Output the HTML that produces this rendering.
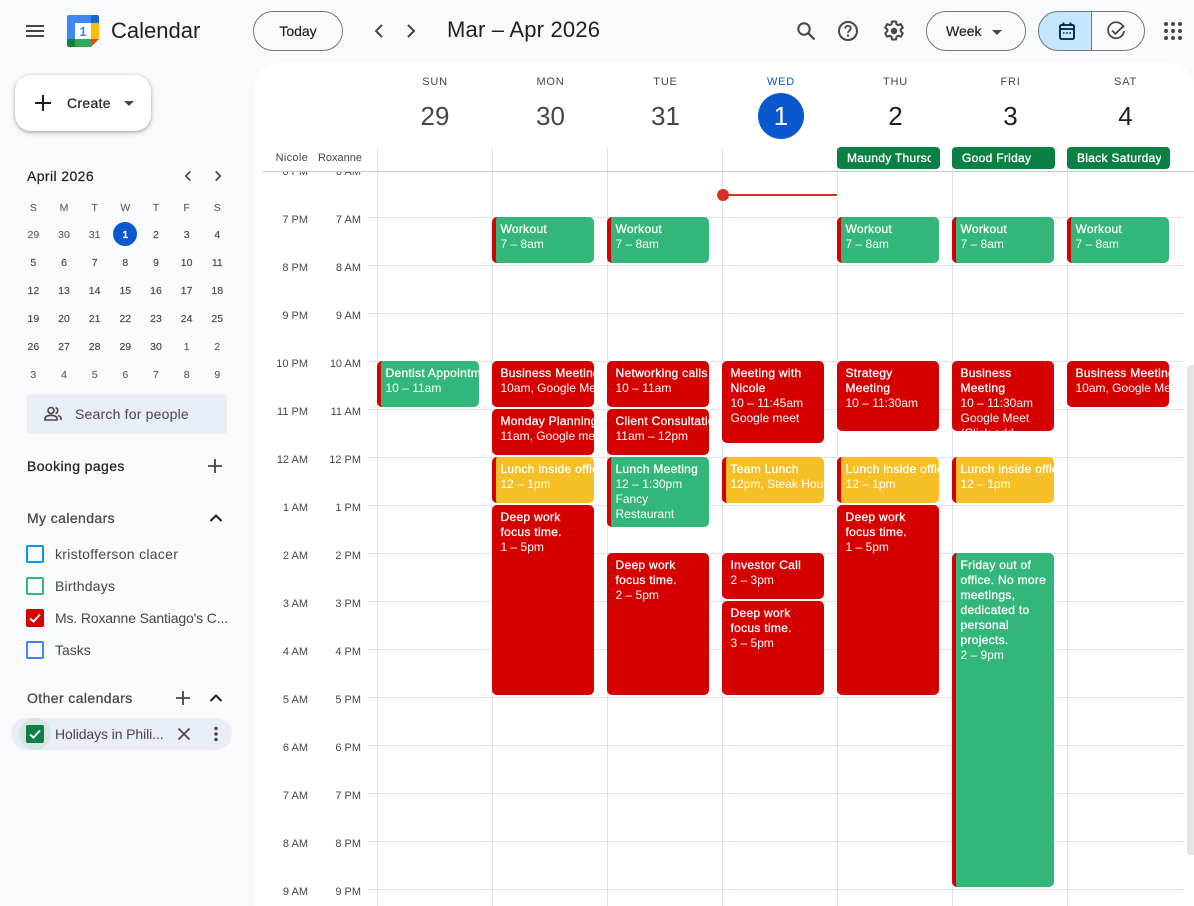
<!DOCTYPE html>
<html><head><meta charset="utf-8"><title>Calendar</title>
<style>
*{box-sizing:border-box}
html,body{margin:0;padding:0}
body{width:1194px;height:906px;overflow:hidden;background:#f8fafd;position:relative;font-family:"Liberation Sans",sans-serif;color:#1f1f1f}
.a{position:absolute;white-space:nowrap}
svg{position:absolute;display:block}
.btn{position:absolute;border:1px solid #747775;border-radius:20px;height:40px;top:11px;font-size:14px;line-height:38px;text-align:center;-webkit-text-stroke:.2px}
.mini{position:absolute;left:18px;top:194px;display:grid;grid-template-columns:repeat(7,30.67px);grid-auto-rows:28px;font-size:10.5px;text-align:center;line-height:28px;-webkit-text-stroke:.15px}
.mini i{font-style:normal;color:#444746}
.mini b{font-weight:normal;color:#fff}
.mini .g{color:#5f6368}
.h{font-size:14px;left:27px;-webkit-text-stroke:.25px;line-height:16px;letter-spacing:.4px}
.it{font-size:14px;left:55px;color:#444746;line-height:16px}
.cb{position:absolute;left:26px;width:18px;height:18px;border-radius:2px;border:2px solid}
.dn{position:absolute;top:75px;width:100px;text-align:center;font-size:11px;letter-spacing:.8px;color:#444746;line-height:13px;margin-top:1px}
.dd{position:absolute;top:100px;width:100px;text-align:center;font-size:26px;color:#444746;line-height:32px}
.vl{position:absolute;top:148px;bottom:0;width:1px;background:#dde3ea}
.hl{position:absolute;left:369px;width:814px;height:1px;background:#dde3ea}
.tl{position:absolute;font-size:11px;color:#444746;line-height:13px;text-align:right;white-space:nowrap;margin-top:2px}
.n{left:258px;width:50px}.r{left:311px;width:50px}
.chip{position:absolute;top:147px;width:103px;height:22px;border-radius:4px;background:#0b8043;color:#fff;font-size:12px;-webkit-text-stroke:.35px #fff;letter-spacing:.3px;line-height:22px;padding-left:10px;overflow:hidden;white-space:nowrap}
.chip span{display:block;overflow:hidden;width:84px}
.e{position:absolute;width:102px;border-radius:5px;font-size:12px;line-height:15px;color:#fff;padding:5px 0 0 8.5px;overflow:hidden;background:#d50000}
.e div{white-space:nowrap}
.e b{display:block;font-weight:normal;-webkit-text-stroke:.3px #fff;letter-spacing:.3px;white-space:nowrap}
.gr{background:#33b679;border-left:4px solid #d50000;padding-left:4.5px}
.ye{background:#f6bf26;border-left:4px solid #d50000;padding-left:4.5px}
</style></head><body>

<!-- top bar -->
<svg style="left:23px;top:19px" width="24" height="24" viewBox="0 0 24 24"><path d="M3 18h18v-2H3v2zm0-5h18v-2H3v2zm0-7v2h18V6H3z" fill="#444746"/></svg>
<svg style="left:67px;top:15px" width="32" height="32" viewBox="0 0 32 32">
<path d="M2 0H24V8H8V24H0V2A2 2 0 0 1 2 0Z" fill="#4285f4"/>
<path d="M24 0H30A2 2 0 0 1 32 2V8H24Z" fill="#1967d2"/>
<rect x="24" y="8" width="8" height="16" fill="#fbbc04"/>
<path d="M8 24H24V32H8Z" fill="#34a853"/>
<path d="M0 24H8V32H2A2 2 0 0 1 0 30Z" fill="#188038"/>
<path d="M24 24H32L24 32Z" fill="#ea4335"/>
<rect x="8" y="8" width="16" height="16" fill="#fff"/>
<text x="16" y="21" font-size="13" font-weight="bold" text-anchor="middle" fill="#4285f4" font-family="Liberation Sans">1</text>
</svg>
<div class="a" style="left:111px;top:17px;font-size:22px;line-height:28px;color:#1f1f1f">Calendar</div>
<div class="btn" style="left:253px;width:90px">Today</div>
<svg style="left:367px;top:19px" width="24" height="24" viewBox="0 0 24 24"><path d="M15 6l-6 6 6 6" fill="none" stroke="#444746" stroke-width="2"/></svg>
<svg style="left:399px;top:19px" width="24" height="24" viewBox="0 0 24 24"><path d="M9 6l6 6-6 6" fill="none" stroke="#444746" stroke-width="2"/></svg>
<div class="a" style="left:447px;top:16px;font-size:22px;line-height:28px;color:#1f1f1f;letter-spacing:.2px">Mar – Apr 2026</div>

<svg style="left:794px;top:19px" width="24" height="24" viewBox="0 0 24 24"><circle cx="10" cy="10" r="5.7" fill="none" stroke="#444746" stroke-width="2"/><path d="M14.2 14.2L20.5 20.5" stroke="#444746" stroke-width="2.2"/></svg>
<svg style="left:836px;top:19px" width="24" height="24" viewBox="0 0 24 24"><circle cx="12" cy="12" r="9" fill="none" stroke="#444746" stroke-width="2"/><path d="M9.2 9.6c0-1.7 1.3-2.7 2.8-2.7s2.8 1 2.8 2.5c0 2.2-2.8 2.2-2.8 4.5" fill="none" stroke="#444746" stroke-width="1.8"/><circle cx="12" cy="16.6" r="1.2" fill="#444746"/></svg>
<svg style="left:882px;top:19px" width="24" height="24" viewBox="0 0 24 24"><path d="M10 2.5h4l.5 2.7 1.7.9 2.6-1 2 3.5-2.1 1.8v2l2.1 1.8-2 3.5-2.6-1-1.7.9-.5 2.9h-4l-.5-2.9-1.7-.9-2.6 1-2-3.5 2.1-1.8v-2L3.2 8.6l2-3.5 2.6 1 1.7-.9z" fill="none" stroke="#444746" stroke-width="2" stroke-linejoin="round"/><circle cx="12" cy="12" r="3.2" fill="#444746"/></svg>
<div class="btn" style="left:926px;width:100px;text-align:left;padding-left:19px">Week</div>
<svg style="left:992px;top:30px" width="10" height="5" viewBox="0 0 10 5"><path d="M0 0h10L5 5z" fill="#444746"/></svg>
<div class="btn" style="left:1038px;width:54px;background:#c2e7ff;border-radius:20px 0 0 20px"></div>
<div class="btn" style="left:1091px;width:54px;border-radius:0 20px 20px 0"></div>
<svg style="left:1055px;top:19px" width="24" height="24" viewBox="0 0 24 24"><rect x="5" y="6" width="14" height="14" rx="1.5" fill="none" stroke="#001d35" stroke-width="1.8"/><path d="M5 10h14M8.5 3.500v3M15.500 3.500v3" stroke="#001d35" stroke-width="1.8"/><path d="M8 14h1.600M11.200 14h1.600M14.400 14H16" stroke="#001d35" stroke-width="1.400"/></svg>
<svg style="left:1104px;top:19px" width="24" height="24" viewBox="0 0 24 24"><path d="M19.600 8.600A8 8 0 1 0 20 12" fill="none" stroke="#444746" stroke-width="1.700"/><path d="M8 11.500l3.400 3.400L20 6.500" fill="none" stroke="#444746" stroke-width="1.800"/></svg>
<svg style="left:1161px;top:19px" width="24" height="24" viewBox="0 0 24 24" fill="#444746"><circle cx="5" cy="5" r="2"/><circle cx="12" cy="5" r="2"/><circle cx="19" cy="5" r="2"/><circle cx="5" cy="12" r="2"/><circle cx="12" cy="12" r="2"/><circle cx="19" cy="12" r="2"/><circle cx="5" cy="19" r="2"/><circle cx="12" cy="19" r="2"/><circle cx="19" cy="19" r="2"/></svg>

<!-- create -->
<div class="a" style="left:15px;top:75px;width:136px;height:56px;background:#fff;border-radius:16px;box-shadow:0 1px 3px rgba(60,64,67,.35),0 2px 6px rgba(60,64,67,.18)"></div>
<svg style="left:31px;top:91px" width="24" height="24" viewBox="0 0 24 24"><path d="M12 4v16M4 12h16" stroke="#1f1f1f" stroke-width="2"/></svg>
<div class="a" style="left:67px;top:95px;font-size:14px;line-height:16px;-webkit-text-stroke:.2px;letter-spacing:.3px">Create</div>
<svg style="left:124px;top:101px" width="10" height="5" viewBox="0 0 10 5"><path d="M0 0h10L5 5z" fill="#444746"/></svg>

<!-- mini calendar -->
<div class="a" style="left:27px;top:168px;font-size:14px;line-height:16px;-webkit-text-stroke:.2px;letter-spacing:.4px">April 2026</div>
<svg style="left:179px;top:167px" width="18" height="18" viewBox="0 0 24 24"><path d="M15 6l-6 6 6 6" fill="none" stroke="#444746" stroke-width="2.200"/></svg>
<svg style="left:209px;top:167px" width="18" height="18" viewBox="0 0 24 24"><path d="M9 6l6 6-6 6" fill="none" stroke="#444746" stroke-width="2.200"/></svg>
<div class="a" style="left:113px;top:222px;width:24px;height:24px;border-radius:50%;background:#0b57d0"></div>
<div class="mini">
<i class="g">S</i><i class="g">M</i><i class="g">T</i><i class="g">W</i><i class="g">T</i><i class="g">F</i><i class="g">S</i>
<i class="g" style="position:relative;top:-1px">29</i><i class="g" style="position:relative;top:-1px">30</i><i class="g" style="position:relative;top:-1px">31</i><b style="position:relative;top:-1px;font-weight:bold">1</b><i style="position:relative;top:-1px">2</i><i style="position:relative;top:-1px">3</i><i style="position:relative;top:-1px">4</i>
<i style="position:relative;top:-1px">5</i><i style="position:relative;top:-1px">6</i><i style="position:relative;top:-1px">7</i><i style="position:relative;top:-1px">8</i><i style="position:relative;top:-1px">9</i><i style="position:relative;top:-1px">10</i><i style="position:relative;top:-1px">11</i>
<i style="position:relative;top:-1px">12</i><i style="position:relative;top:-1px">13</i><i style="position:relative;top:-1px">14</i><i style="position:relative;top:-1px">15</i><i style="position:relative;top:-1px">16</i><i style="position:relative;top:-1px">17</i><i style="position:relative;top:-1px">18</i>
<i style="position:relative;top:-1px">19</i><i style="position:relative;top:-1px">20</i><i style="position:relative;top:-1px">21</i><i style="position:relative;top:-1px">22</i><i style="position:relative;top:-1px">23</i><i style="position:relative;top:-1px">24</i><i style="position:relative;top:-1px">25</i>
<i style="position:relative;top:-1px">26</i><i style="position:relative;top:-1px">27</i><i style="position:relative;top:-1px">28</i><i style="position:relative;top:-1px">29</i><i style="position:relative;top:-1px">30</i><i class="g" style="position:relative;top:-1px">1</i><i class="g" style="position:relative;top:-1px">2</i>
<i class="g" style="position:relative;top:-1px">3</i><i class="g" style="position:relative;top:-1px">4</i><i class="g" style="position:relative;top:-1px">5</i><i class="g" style="position:relative;top:-1px">6</i><i class="g" style="position:relative;top:-1px">7</i><i class="g" style="position:relative;top:-1px">8</i><i class="g" style="position:relative;top:-1px">9</i>
</div>

<!-- search people -->
<div class="a" style="left:27px;top:394px;width:200px;height:40px;background:#e9eef6;border-radius:4px"></div>
<svg style="left:43px;top:404px" width="20" height="20" viewBox="0 0 20 20"><circle cx="8" cy="6.500" r="3" fill="none" stroke="#444746" stroke-width="1.600"/><path d="M2 16v-1.500c0-2 3-3.200 6-3.200s6 1.200 6 3.200V16z" fill="none" stroke="#444746" stroke-width="1.600"/><path d="M12.500 3.600a3 3 0 0 1 0 5.800M15 11.600c1.800.5 3 1.500 3 3V16" fill="none" stroke="#444746" stroke-width="1.600"/></svg>
<div class="a" style="left:75px;top:406px;font-size:14px;line-height:16px;color:#444746;letter-spacing:.2px">Search for people</div>

<!-- lists -->
<div class="a h" style="top:458px">Booking pages</div>
<svg style="left:205px;top:456px" width="20" height="20" viewBox="0 0 20 20"><path d="M10 3v14M3 10h14" stroke="#444746" stroke-width="1.800"/></svg>
<div class="a h" style="top:510px;color:#444746">My calendars</div>
<svg style="left:206px;top:508px" width="20" height="20" viewBox="0 0 20 20"><path d="M4.500 13L10 7.500 15.500 13" fill="none" stroke="#1f1f1f" stroke-width="2"/></svg>
<div class="cb" style="top:545px;border-color:#039be5"></div><div class="a it" style="top:546px;letter-spacing:.3px">kristofferson clacer</div>
<div class="cb" style="top:577px;border-color:#33b679"></div><div class="a it" style="top:578px;letter-spacing:.2px">Birthdays</div>
<div class="cb" style="top:609px;border-color:#d50000;background:#d50000"></div><svg style="left:26px;top:609px" width="18" height="18" viewBox="0 0 18 18"><path d="M4 9.500l3.500 3L14 5.500" fill="none" stroke="#fff" stroke-width="2"/></svg><div class="a it" style="top:610px;letter-spacing:-.15px">Ms. Roxanne Santiago's C...</div>
<div class="cb" style="top:641px;border-color:#4285f4"></div><div class="a it" style="top:642px">Tasks</div>

<div class="a h" style="top:690px;color:#444746">Other calendars</div>
<svg style="left:173px;top:688px" width="20" height="20" viewBox="0 0 20 20"><path d="M10 3v14M3 10h14" stroke="#444746" stroke-width="1.800"/></svg>
<svg style="left:206px;top:688px" width="20" height="20" viewBox="0 0 20 20"><path d="M4.500 13L10 7.500 15.500 13" fill="none" stroke="#1f1f1f" stroke-width="2"/></svg>
<div class="a" style="left:11px;top:718px;width:221px;height:32px;background:#e9eef6;border-radius:16px"></div>
<div class="a" style="left:19px;top:718px;width:32px;height:32px;border-radius:50%;background:#d6e4e4"></div>
<div class="cb" style="top:725px;border-color:#0b8043;background:#0b8043"></div><svg style="left:26px;top:725px" width="18" height="18" viewBox="0 0 18 18"><path d="M4 9.500l3.500 3L14 5.500" fill="none" stroke="#fff" stroke-width="2"/></svg>
<div class="a it" style="top:726px;letter-spacing:-.1px">Holidays in Phili...</div>
<svg style="left:176px;top:726px" width="16" height="16" viewBox="0 0 16 16"><path d="M2.500 2.500l11 11M13.500 2.500l-11 11" stroke="#444746" stroke-width="1.700"/></svg>
<svg style="left:212px;top:725px" width="8" height="18" viewBox="0 0 8 18" fill="#444746"><circle cx="4" cy="3.500" r="1.700"/><circle cx="4" cy="9" r="1.700"/><circle cx="4" cy="14.500" r="1.700"/></svg>

<!-- main panel -->
<div class="a" style="left:255px;top:63px;width:939px;height:843px;background:#fff;border-radius:24px 24px 0 0"></div>

<div class="dn" style="left:385px">SUN</div><div class="dd" style="left:385px">29</div>
<div class="dn" style="left:500.500px">MON</div><div class="dd" style="left:500.500px">30</div>
<div class="dn" style="left:615.500px">TUE</div><div class="dd" style="left:615.500px">31</div>
<div class="a" style="left:758px;top:93px;width:46px;height:46px;border-radius:50%;background:#0b57d0"></div>
<div class="dn" style="left:731px;color:#0b57d0">WED</div><div class="dd" style="left:731px;color:#fff">1</div>
<div class="dn" style="left:845.500px">THU</div><div class="dd" style="left:845.500px;color:#1f1f1f">2</div>
<div class="dn" style="left:960.500px">FRI</div><div class="dd" style="left:960.500px;color:#1f1f1f">3</div>
<div class="dn" style="left:1075.500px">SAT</div><div class="dd" style="left:1075.500px;color:#1f1f1f">4</div>

<div class="tl" style="left:258px;width:50px;top:150px;letter-spacing:.3px">Nicole</div>
<div class="tl" style="left:312px;width:50px;top:150px">Roxanne</div>

<!-- grid lines -->
<div class="hl" style="top:217px"></div><div class="hl" style="top:265px"></div><div class="hl" style="top:313px"></div><div class="hl" style="top:361px"></div><div class="hl" style="top:409px"></div><div class="hl" style="top:457px"></div><div class="hl" style="top:505px"></div><div class="hl" style="top:553px"></div><div class="hl" style="top:601px"></div><div class="hl" style="top:649px"></div><div class="hl" style="top:697px"></div><div class="hl" style="top:745px"></div><div class="hl" style="top:793px"></div><div class="hl" style="top:841px"></div><div class="hl" style="top:889px"></div>
<div class="vl" style="left:377px"></div><div class="vl" style="left:492px"></div><div class="vl" style="left:607px"></div><div class="vl" style="left:722px"></div><div class="vl" style="left:837px"></div><div class="vl" style="left:952px"></div><div class="vl" style="left:1067px"></div>

<!-- clipped top labels -->
<div class="a" style="left:255px;top:171px;width:120px;height:12px;overflow:hidden">
<div class="tl" style="left:3px;width:50px;top:-7px">6 PM</div><div class="tl" style="left:56px;width:50px;top:-7px">6 AM</div>
</div>
<div class="a" style="left:263px;top:171px;width:931px;height:1px;background:#c4c7cc"></div>

<!-- time labels -->
<div class="tl n" style="top:212px">7 PM</div><div class="tl r" style="top:212px">7 AM</div>
<div class="tl n" style="top:260px">8 PM</div><div class="tl r" style="top:260px">8 AM</div>
<div class="tl n" style="top:308px">9 PM</div><div class="tl r" style="top:308px">9 AM</div>
<div class="tl n" style="top:356px">10 PM</div><div class="tl r" style="top:356px">10 AM</div>
<div class="tl n" style="top:404px">11 PM</div><div class="tl r" style="top:404px">11 AM</div>
<div class="tl n" style="top:452px">12 AM</div><div class="tl r" style="top:452px">12 PM</div>
<div class="tl n" style="top:500px">1 AM</div><div class="tl r" style="top:500px">1 PM</div>
<div class="tl n" style="top:548px">2 AM</div><div class="tl r" style="top:548px">2 PM</div>
<div class="tl n" style="top:596px">3 AM</div><div class="tl r" style="top:596px">3 PM</div>
<div class="tl n" style="top:644px">4 AM</div><div class="tl r" style="top:644px">4 PM</div>
<div class="tl n" style="top:692px">5 AM</div><div class="tl r" style="top:692px">5 PM</div>
<div class="tl n" style="top:740px">6 AM</div><div class="tl r" style="top:740px">6 PM</div>
<div class="tl n" style="top:788px">7 AM</div><div class="tl r" style="top:788px">7 PM</div>
<div class="tl n" style="top:836px">8 AM</div><div class="tl r" style="top:836px">8 PM</div>
<div class="tl n" style="top:884px">9 AM</div><div class="tl r" style="top:884px">9 PM</div>

<!-- all day -->
<div class="chip" style="left:837px"><span>Maundy Thursday</span></div>
<div class="chip" style="left:952px"><span>Good Friday</span></div>
<div class="chip" style="left:1067px"><span>Black Saturday</span></div>

<!-- now line -->
<div class="a" style="left:723px;top:194px;width:114px;height:2px;background:#d93025"></div>
<div class="a" style="left:717px;top:189px;width:12px;height:12px;border-radius:50%;background:#d93025"></div>

<!-- Sun -->
<div class="e gr" style="left:377px;top:361px;height:46px"><b>Dentist Appointment</b><div>10 – 11am</div></div>
<!-- Mon -->
<div class="e gr" style="left:492px;top:217px;height:46px"><b>Workout</b><div>7 – 8am</div></div>
<div class="e" style="left:492px;top:361px;height:46px"><b>Business Meeting</b><div>10am, Google Meet</div></div>
<div class="e" style="left:492px;top:409px;height:46px"><b>Monday Planning</b><div>11am, Google meet</div></div>
<div class="e ye" style="left:492px;top:457px;height:46px"><b>Lunch inside office</b><div>12 – 1pm</div></div>
<div class="e" style="left:492px;top:505px;height:190px"><b>Deep work</b><b>focus time.</b><div>1 – 5pm</div></div>
<!-- Tue -->
<div class="e gr" style="left:607px;top:217px;height:46px"><b>Workout</b><div>7 – 8am</div></div>
<div class="e" style="left:607px;top:361px;height:46px"><b>Networking calls</b><div>10 – 11am</div></div>
<div class="e" style="left:607px;top:409px;height:46px"><b>Client Consultation</b><div>11am – 12pm</div></div>
<div class="e gr" style="left:607px;top:457px;height:70px"><b>Lunch Meeting</b><div>12 – 1:30pm</div><div>Fancy</div><div>Restaurant</div></div>
<div class="e" style="left:607px;top:553px;height:142px"><b>Deep work</b><b>focus time.</b><div>2 – 5pm</div></div>
<!-- Wed -->
<div class="e" style="left:722px;top:361px;height:82px"><b>Meeting with</b><b>Nicole</b><div>10 – 11:45am</div><div>Google meet</div></div>
<div class="e ye" style="left:722px;top:457px;height:46px"><b>Team Lunch</b><div>12pm, Steak House</div></div>
<div class="e" style="left:722px;top:553px;height:46px"><b>Investor Call</b><div>2 – 3pm</div></div>
<div class="e" style="left:722px;top:601px;height:94px"><b>Deep work</b><b>focus time.</b><div>3 – 5pm</div></div>
<!-- Thu -->
<div class="e gr" style="left:837px;top:217px;height:46px"><b>Workout</b><div>7 – 8am</div></div>
<div class="e" style="left:837px;top:361px;height:70px"><b>Strategy</b><b>Meeting</b><div>10 – 11:30am</div></div>
<div class="e ye" style="left:837px;top:457px;height:46px"><b>Lunch inside office</b><div>12 – 1pm</div></div>
<div class="e" style="left:837px;top:505px;height:190px"><b>Deep work</b><b>focus time.</b><div>1 – 5pm</div></div>
<!-- Fri -->
<div class="e gr" style="left:952px;top:217px;height:46px"><b>Workout</b><div>7 – 8am</div></div>
<div class="e" style="left:952px;top:361px;height:70px"><b>Business</b><b>Meeting</b><div>10 – 11:30am</div><div>Google Meet</div><div>(Click add</div></div>
<div class="e ye" style="left:952px;top:457px;height:46px"><b>Lunch inside office</b><div>12 – 1pm</div></div>
<div class="e gr" style="left:952px;top:553px;height:334px"><b>Friday out of</b><b>office. No more</b><b>meetings,</b><b>dedicated to</b><b>personal</b><b>projects.</b><div>2 – 9pm</div></div>
<!-- Sat -->
<div class="e gr" style="left:1067px;top:217px;height:46px"><b>Workout</b><div>7 – 8am</div></div>
<div class="e" style="left:1067px;top:361px;height:46px"><b>Business Meeting</b><div>10am, Google Meet</div></div>

<!-- scrollbar -->
<div class="a" style="left:1187px;top:365px;width:7px;height:490px;background:#e3e5e8;border-radius:4px 0 0 4px"></div>
</body></html>
